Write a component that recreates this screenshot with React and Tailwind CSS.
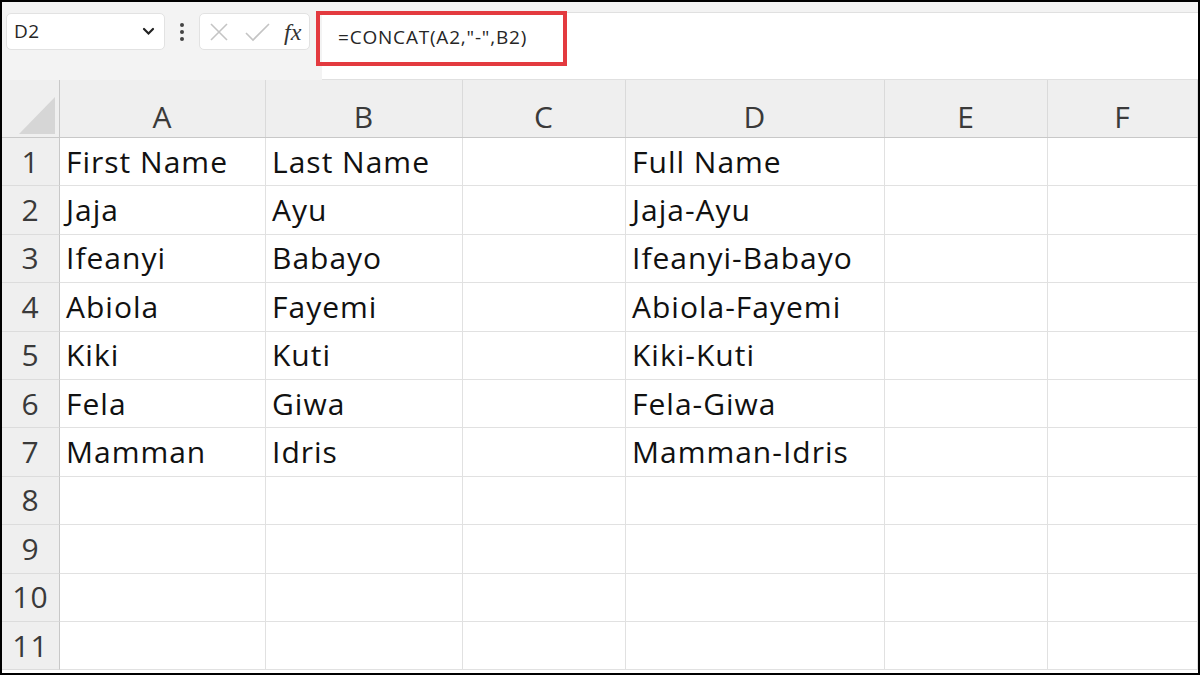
import React from "react";

const cols = ["A", "B", "C", "D", "E", "F"];

const rows = [
  ["First Name", "Last Name", "", "Full Name"],
  ["Jaja", "Ayu", "", "Jaja-Ayu"],
  ["Ifeanyi", "Babayo", "", "Ifeanyi-Babayo"],
  ["Abiola", "Fayemi", "", "Abiola-Fayemi"],
  ["Kiki", "Kuti", "", "Kiki-Kuti"],
  ["Fela", "Giwa", "", "Fela-Giwa"],
  ["Mamman", "Idris", "", "Mamman-Idris"],
  [],
  [],
  [],
  [],
];

const gridCols = "grid grid-cols-[58px_206px_197px_163px_259px_163px_1fr]";

export default function App() {
  return (
    <div
      className="w-[1200px] h-[675px] overflow-hidden bg-white border-2 border-black box-border flex flex-col"
      style={{ fontFamily: '"Open Sans", "Noto Sans", sans-serif' }}
    >
      {/* formula bar */}
      <div className="h-[78px] shrink-0 bg-[#f3f3f3] flex items-start pt-[10px]">
        <div className="ml-[4px] mt-[1px] w-[159px] h-[37px] bg-white border border-[#e2e2e2] rounded-[5px] flex items-center justify-between pl-[7px] pr-[9px]">
          <span className="text-[19px] tracking-[0.5px] text-[#262626]">D2</span>
          <svg width="13" height="9" viewBox="0 0 13 9">
            <path d="M2 2 L6.5 6.5 L11 2" fill="none" stroke="#222" strokeWidth="2.2" strokeLinecap="round" />
          </svg>
        </div>
        <div className="w-[34px] h-[39px] flex flex-col items-center justify-center gap-[3px]">
          <span className="w-[4px] h-[4px] rounded-full bg-[#444]" />
          <span className="w-[4px] h-[4px] rounded-full bg-[#444]" />
          <span className="w-[4px] h-[4px] rounded-full bg-[#444]" />
        </div>
        <div className="mt-[1px] w-[111px] h-[37px] bg-white border border-[#e2e2e2] rounded-[5px] flex items-center pl-[9px]">
          <svg width="20" height="20" viewBox="0 0 20 20">
            <path d="M2 2 L18 18 M18 2 L2 18" stroke="#c4c4c4" strokeWidth="1.6" />
          </svg>
          <svg className="ml-[16px]" width="25" height="20" viewBox="0 0 25 20">
            <path d="M1 11 L8 18 L24 2" fill="none" stroke="#c4c4c4" strokeWidth="1.6" />
          </svg>
          <span
            className="ml-[14px] text-[24px] italic text-[#333] leading-none"
            style={{ fontFamily: '"Liberation Serif", serif' }}
          >
            fx
          </span>
        </div>
        <div className="ml-[12px] flex-1 h-[68px] bg-white border-t border-b border-[#e0e0e0] relative">
          <div className="absolute left-[-6px] top-[-2px] w-[251px] h-[55px] border-[4px] border-[#e33a3f]" />
          <span className="absolute left-[16px] top-[15px] text-[19px] tracking-[0.8px] text-[#262626] leading-none">
            =CONCAT(A2,"-",B2)
          </span>
        </div>
      </div>

      {/* column headers */}
      <div className={`${gridCols} h-[58px] shrink-0 bg-[#efefef] border-b border-[#c8c8c8]`}>
        <div className="border-r border-[#c8c8c8] flex items-end justify-end pr-[4px] pb-[3px]">
          <svg width="36" height="37" viewBox="0 0 36 37">
            <polygon points="36,0 36,37 0,37" fill="#d6d6d6" />
          </svg>
        </div>
        {cols.map((c) => (
          <div
            key={c}
            className="border-r border-[#dadada] flex items-center justify-center pt-[16px] text-[30px] leading-none tracking-[1px] text-[#3a3a3a]"
          >
            {c}
          </div>
        ))}
      </div>

      {/* rows */}
      {rows.map((r, i) => (
        <div key={i} className={`${gridCols} h-[48.4px] shrink-0`}>
          <div className="bg-[#efefef] border-r border-[#c8c8c8] border-b border-b-[#dcdcdc] flex items-center justify-center text-[30px] leading-none tracking-[1px] text-[#3a3a3a]">
            {i + 1}
          </div>
          {cols.map((c, j) => (
            <div
              key={c}
              className="border-r border-b border-[#e1e1e1] flex items-center pl-[6px] text-[30px] leading-none tracking-[1px] text-[#111] whitespace-nowrap overflow-hidden"
            >
              {r[j] || ""}
            </div>
          ))}
        </div>
      ))}
    </div>
  );
}
